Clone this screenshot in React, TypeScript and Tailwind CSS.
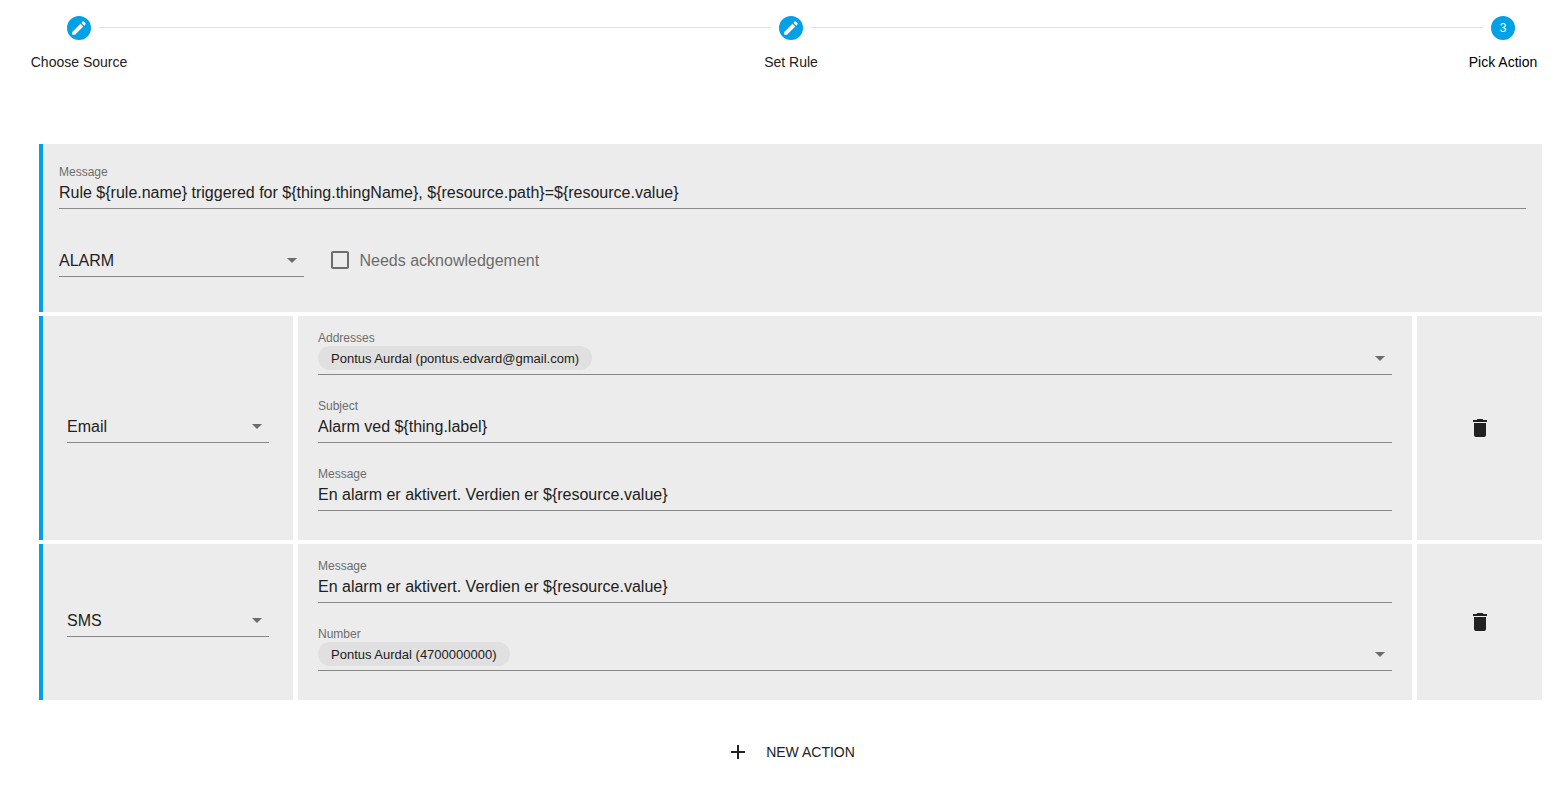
import { Fragment, useId, useState, type ReactNode } from "react";
import { MdAdd, MdArrowDropDown, MdCheckBox, MdCheckBoxOutlineBlank, MdEdit } from "react-icons/md";

const steps = ["Choose Source", "Set Rule", "Pick Action"];

function TrashIcon() {
  return (
    <svg viewBox="0 0 24 24" className="size-6" fill="currentColor" aria-hidden="true">
      <path d="M19 4h-3.5l-1-1h-5l-1 1H5v2h14zM6 19a2 2 0 0 0 2 2h8a2 2 0 0 0 2-2V7H6z" />
    </svg>
  );
}

function Stepper({ current }: { current: number }) {
  return (
    <ol className="flex pl-6 pr-[6px] pt-4">
      {steps.map((step, index) => (
        <Fragment key={step}>
          {index > 0 && (
            <li aria-hidden="true" className="-mx-[35px] mt-[11px] h-px flex-1 bg-[#e0e0e0]" />
          )}
          <li className="flex w-[110px] shrink-0 flex-col items-center gap-3">
            <span className="flex size-6 items-center justify-center rounded-full bg-[#00a1e6] text-xs text-white">
              {index < current ? <MdEdit className="size-[18px]" aria-hidden="true" /> : index + 1}
            </span>
            <span
              className={
                index === current
                  ? "whitespace-nowrap text-sm leading-5 text-black"
                  : "whitespace-nowrap text-sm leading-5 text-[#212121]"
              }
            >
              {step}
            </span>
          </li>
        </Fragment>
      ))}
    </ol>
  );
}

function TextField({ label, value }: { label: string; value: string }) {
  const id = useId();
  return (
    <div className="flex flex-col">
      <label htmlFor={id} className="text-xs leading-4 text-[#6c6c6c]">
        {label}
      </label>
      <input
        id={id}
        type="text"
        defaultValue={value}
        className="h-[29px] w-full border-b border-[#888888] pb-[2px] text-base leading-[26px] outline-none"
      />
    </div>
  );
}

function SelectField({ label, value, options }: { label: string; value: string; options: string[] }) {
  return (
    <div className="grid w-full items-start border-b border-[#888888] pb-[2px]">
      <select
        aria-label={label}
        defaultValue={value}
        className="col-start-1 row-start-1 h-[26px] w-full appearance-none text-base leading-[26px] outline-none"
      >
        {options.map((option) => (
          <option key={option}>{option}</option>
        ))}
      </select>
      <MdArrowDropDown
        aria-hidden="true"
        className="pointer-events-none col-start-1 row-start-1 size-6 justify-self-end text-[#6c6c6c]"
      />
    </div>
  );
}

function ChipField({ label, chip }: { label: string; chip: string }) {
  const id = useId();
  return (
    <div className="flex flex-col">
      <label htmlFor={id} className="text-xs leading-4 text-[#6c6c6c]">
        {label}
      </label>
      <button
        id={id}
        type="button"
        aria-haspopup="listbox"
        className="flex w-full items-center justify-between border-b border-[#888888] pb-1"
      >
        <span className="h-6 rounded-full bg-[#e0e0e0] px-[13px] text-[13px] leading-[26px]">{chip}</span>
        <MdArrowDropDown className="size-6 text-[#6c6c6c]" aria-hidden="true" />
      </button>
    </div>
  );
}

function ActionRow({ type, children }: { type: string; children: ReactNode }) {
  return (
    <section aria-label={type} className="grid grid-cols-[254fr_1114fr_125fr] gap-[5px]">
      <div className="flex items-center border-l-4 border-[#00a1e6] bg-[#ececec] px-6">
        <SelectField label="Action type" value={type} options={["Email", "SMS"]} />
      </div>
      <div className="flex flex-col gap-[23px] bg-[#ececec] px-5 pb-[29px] pt-[14px]">{children}</div>
      <div className="flex items-center justify-center bg-[#ececec]">
        <button type="button" aria-label={"Delete " + type + " action"}>
          <TrashIcon />
        </button>
      </div>
    </section>
  );
}

export default function App() {
  const [acknowledge, setAcknowledge] = useState(false);
  const Box = acknowledge ? MdCheckBox : MdCheckBoxOutlineBlank;

  return (
    <main className="min-h-screen bg-white font-['Liberation_Sans',Arial,sans-serif] text-[#212121]">
      <Stepper current={2} />

      <div className="ml-[39px] mr-[22px] mt-[72px] flex flex-col gap-1">
        <section
          aria-label="Alarm"
          className="flex flex-col gap-[39px] border-l-4 border-[#00a1e6] bg-[#ececec] px-4 pb-[35px] pt-5"
        >
          <TextField
            label="Message"
            value="Rule ${rule.name} triggered for ${thing.thingName}, ${resource.path}=${resource.value}"
          />
          <div className="flex items-start gap-6">
            <div className="w-1/6">
              <SelectField label="Severity" value="ALARM" options={["ALARM", "WARNING", "INFO"]} />
            </div>
            <label className="flex items-start gap-2 text-base leading-[26px] text-[#6c6c6c]">
              <input
                type="checkbox"
                checked={acknowledge}
                onChange={(event) => setAcknowledge(event.target.checked)}
                className="sr-only"
              />
              <Box className="size-6" aria-hidden="true" />
              Needs acknowledgement
            </label>
          </div>
        </section>

        <ActionRow type="Email">
          <ChipField label="Addresses" chip="Pontus Aurdal (pontus.edvard@gmail.com)" />
          <TextField label="Subject" value="Alarm ved ${thing.label}" />
          <TextField label="Message" value="En alarm er aktivert. Verdien er ${resource.value}" />
        </ActionRow>

        <ActionRow type="SMS">
          <TextField label="Message" value="En alarm er aktivert. Verdien er ${resource.value}" />
          <ChipField label="Number" chip="Pontus Aurdal (4700000000)" />
        </ActionRow>

        <button type="button" className="mt-9 flex items-center gap-4 self-center text-sm leading-6">
          <MdAdd className="size-6" aria-hidden="true" />
          NEW ACTION
        </button>
      </div>
    </main>
  );
}
